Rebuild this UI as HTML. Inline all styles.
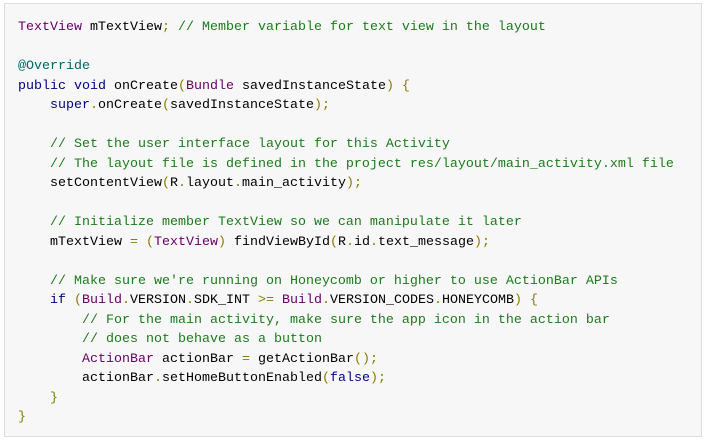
<!DOCTYPE html>
<html><head><style>
html,body{margin:0;padding:0;background:#fff;width:706px;height:443px;overflow:hidden}
.box{position:absolute;left:4px;top:3px;width:698px;height:434px;box-sizing:border-box;border:1px solid #ddd;background:#f7f7f7}
pre{margin:0;position:absolute;left:18px;top:18px;font-family:"Liberation Mono",monospace;font-size:13.33px;line-height:19.5px;color:#000}
.k{color:#000088}.t{color:#660066}.c{color:#1d7a1d}.p{color:#8a7a00}.a{color:#006666}
</style></head><body><div class="box"></div>
<pre><span class="t">TextView</span> mTextView<span class="p">;</span> <span class="c">// Member variable for text view in the layout</span>

<span class="a">@Override</span>
<span class="k">public</span> <span class="k">void</span> onCreate<span class="p">(</span><span class="t">Bundle</span> savedInstanceState<span class="p">)</span> <span class="p">{</span>
    <span class="k">super</span><span class="p">.</span>onCreate<span class="p">(</span>savedInstanceState<span class="p">);</span>

    <span class="c">// Set the user interface layout for this Activity</span>
    <span class="c">// The layout file is defined in the project res/layout/main_activity.xml file</span>
    setContentView<span class="p">(</span>R<span class="p">.</span>layout<span class="p">.</span>main_activity<span class="p">);</span>

    <span class="c">// Initialize member TextView so we can manipulate it later</span>
    mTextView <span class="p">=</span> <span class="p">(</span><span class="t">TextView</span><span class="p">)</span> findViewById<span class="p">(</span>R<span class="p">.</span>id<span class="p">.</span>text_message<span class="p">);</span>

    <span class="c">// Make sure we're running on Honeycomb or higher to use ActionBar APIs</span>
    <span class="k">if</span> <span class="p">(</span><span class="t">Build</span><span class="p">.</span>VERSION<span class="p">.</span>SDK_INT <span class="p">&gt;=</span> <span class="t">Build</span><span class="p">.</span>VERSION_CODES<span class="p">.</span>HONEYCOMB<span class="p">)</span> <span class="p">{</span>
        <span class="c">// For the main activity, make sure the app icon in the action bar</span>
        <span class="c">// does not behave as a button</span>
        <span class="t">ActionBar</span> actionBar <span class="p">=</span> getActionBar<span class="p">();</span>
        actionBar<span class="p">.</span>setHomeButtonEnabled<span class="p">(</span><span class="k">false</span><span class="p">);</span>
    <span class="p">}</span>
<span class="p">}</span></pre>
</body></html>
